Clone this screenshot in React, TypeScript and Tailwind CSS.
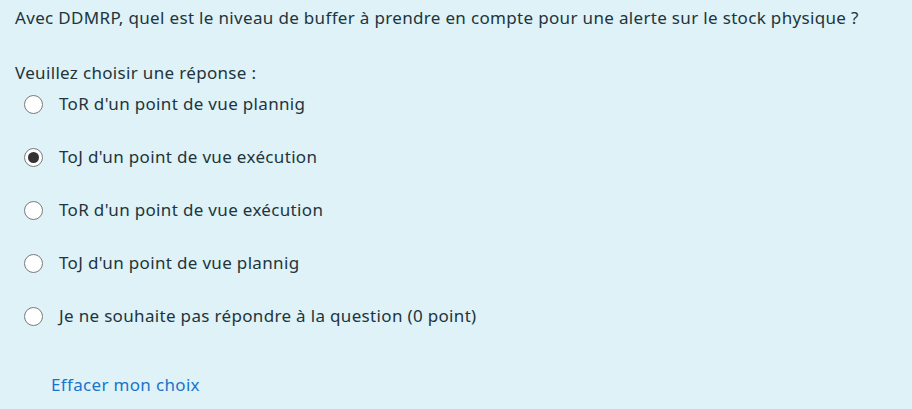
import { useState } from "react";

const options = [
  "ToR d'un point de vue plannig",
  "ToJ d'un point de vue exécution",
  "ToR d'un point de vue exécution",
  "ToJ d'un point de vue plannig",
  "Je ne souhaite pas répondre à la question (0 point)",
];

export default function App() {
  const [choice, setChoice] = useState<number | null>(1);

  return (
    <div
      className="w-[912px] h-[409px] bg-[#def2f8] text-[#22343c] text-[17px] tracking-[0.33px] leading-[24px] pl-[15px] pt-[6px] overflow-hidden"
      style={{ fontFamily: '"Noto Sans", "Open Sans", sans-serif' }}
    >
      <p>
        Avec DDMRP, quel est le niveau de buffer à prendre en compte pour une alerte sur le stock physique ?
      </p>

      <p className="mt-[31px]">Veuillez choisir une réponse :</p>

      <div className="flex flex-col gap-[29px] mt-[7px]">
        {options.map((label, i) => (
          <label
            key={i}
            onClick={() => setChoice(i)}
            className="flex items-center h-[24px] pl-[9px] cursor-pointer"
          >
            <span className="w-[19px] h-[19px] rounded-full border-[1.5px] border-[#7a7a7a] bg-white flex items-center justify-center shrink-0">
              {choice === i && <span className="w-[11px] h-[11px] rounded-full bg-[#333]" />}
            </span>
            <span className="ml-[16px]">{label}</span>
          </label>
        ))}
      </div>

      <a
        className="inline-block mt-[45px] ml-[36px] text-[#1a74cc] cursor-pointer"
        onClick={() => setChoice(null)}
      >
        Effacer mon choix
      </a>
    </div>
  );
}
